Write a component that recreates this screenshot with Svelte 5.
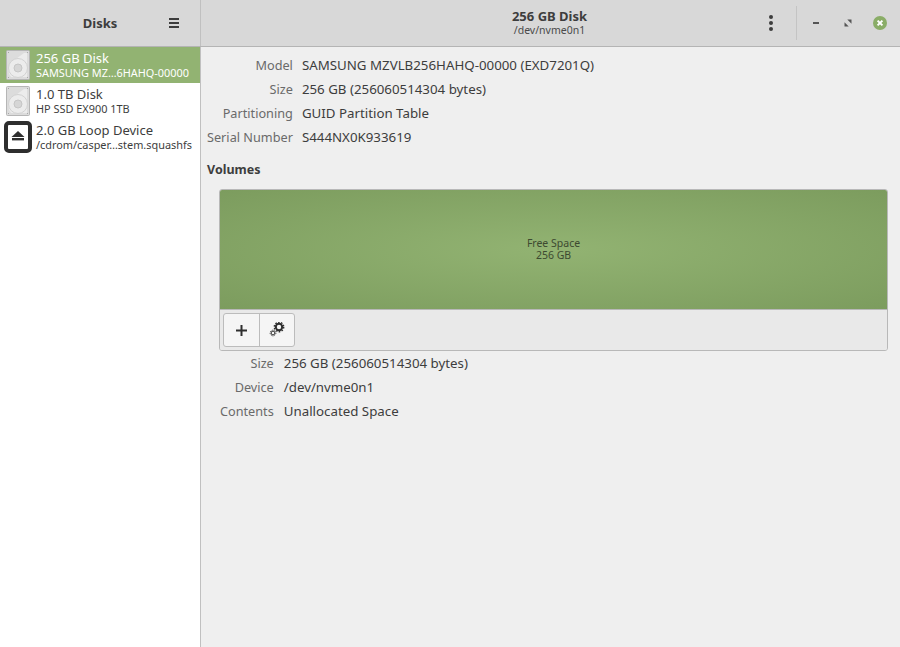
<script>
	const disks = [
		{ name: '256 GB Disk', sub: 'SAMSUNG MZ…6HAHQ-00000', kind: 'disk', selected: true },
		{ name: '1.0 TB Disk', sub: 'HP SSD EX900 1TB', kind: 'disk' },
		{ name: '2.0 GB Loop Device', sub: '/cdrom/casper…stem.squashfs', kind: 'loop' }
	];
	const driveInfo = [
		['Model', 'SAMSUNG MZVLB256HAHQ-00000 (EXD7201Q)'],
		['Size', '256 GB (256060514304 bytes)'],
		['Partitioning', 'GUID Partition Table'],
		['Serial Number', 'S444NX0K933619']
	];
	const volumeInfo = [
		['Size', '256 GB (256060514304 bytes)'],
		['Device', '/dev/nvme0n1'],
		['Contents', 'Unallocated Space']
	];
</script>

<main>
	<header>
		<div class="head-left">
			<span class="head-title">Disks</span>
			<svg class="burger" width="12" height="12" viewBox="0 0 12 12">
				<path d="M1 1h10v2H1zM1 5h10v2H1zM1 9h10v2H1z" fill="#3d3d3d" />
			</svg>
		</div>
		<div class="head-right">
			<div class="head-center">
				<span class="head-title">256 GB Disk</span>
				<span class="head-sub">/dev/nvme0n1</span>
			</div>
			<div class="head-tools">
				<svg width="6" height="18" viewBox="0 0 6 18">
					<circle cx="3" cy="3" r="2" fill="#3d3d3d" />
					<circle cx="3" cy="9" r="2" fill="#3d3d3d" />
					<circle cx="3" cy="15" r="2" fill="#3d3d3d" />
				</svg>
				<div class="sep"></div>
				<div class="win-btns">
					<span class="win-btn">
						<svg width="8" height="8" viewBox="0 0 8 8"><rect x="1" y="3" width="6" height="2" fill="#555" /></svg>
					</span>
					<span class="win-btn">
						<svg width="8" height="8" viewBox="0 0 8 8">
							<path d="M7.5 0.5v4.2L3.3 0.5zM0.5 7.5V3.3L4.7 7.5z" fill="#555" />
						</svg>
					</span>
					<span class="win-btn">
						<svg width="14" height="14" viewBox="0 0 14 14">
							<circle cx="7" cy="7" r="7" fill="#8aad67" />
							<path d="M4.6 4.6l4.8 4.8M9.4 4.6l-4.8 4.8" stroke="#fff" stroke-width="2" />
						</svg>
					</span>
				</div>
			</div>
		</div>
	</header>

	<div class="body">
		<aside>
			{#each disks as disk}
				<div class="row" class:selected={disk.selected}>
					{#if disk.kind === 'disk'}
						<svg class="icon" width="28" height="32" viewBox="0 0 28 32">
							<rect x="1.5" y="1.5" width="23" height="29" rx="1" fill="#dcdcdc" stroke="#b6b6b6" />
							<path d="M19 4 H22 V28 H6 A 10 10 0 0 1 3.5 21 C 3.5 17 5 15 7.5 12.5 Z" fill="#ececec" />
							<circle cx="13" cy="19" r="9.5" fill="#ececec" stroke="#d2d2d2" />
							<circle cx="13" cy="19" r="4" fill="#d6d6d6" stroke="#c6c6c6" />
							<g fill="#a8a8a8">
								<rect x="3" y="3" width="1" height="1" />
								<rect x="22" y="3" width="1" height="1" />
								<rect x="3" y="28" width="1" height="1" />
								<rect x="22" y="28" width="1" height="1" />
							</g>
						</svg>
					{:else}
						<svg class="icon loop" width="28" height="32" viewBox="0 0 28 32">
							<rect x="2" y="2" width="24" height="28" rx="3" fill="#fff" stroke="#2e2e2e" stroke-width="4" />
							<path d="M14 10l6.5 6H7.5z" fill="#2e2e2e" />
							<rect x="8" y="17" width="12" height="2.4" fill="#2e2e2e" />
						</svg>
					{/if}
					<div class="row-text">
						<span class="row-name">{disk.name}</span>
						<span class="row-sub">{disk.sub}</span>
					</div>
				</div>
			{/each}
		</aside>

		<section>
			<dl class="info drive">
				{#each driveInfo as [key, value]}
					<dt>{key}</dt>
					<dd>{value}</dd>
				{/each}
			</dl>

			<h2>Volumes</h2>

			<div class="volumes">
				<div class="free">
					<span>Free Space</span>
					<span>256 GB</span>
				</div>
				<div class="toolbar">
					<div class="btn-group">
						<button aria-label="Add">
							<svg width="11" height="11" viewBox="0 0 11 11">
								<path d="M4.5 0h2v4.5H11v2H6.5V11h-2V6.5H0v-2h4.5z" fill="#2e2e2e" />
							</svg>
						</button>
						<button aria-label="Settings">
							<svg width="16" height="16" viewBox="0 0 16 16">
								<circle cx="10" cy="5" r="3.2" fill="none" stroke="#2e2e2e" stroke-width="2" />
								<circle cx="10" cy="5" r="4.7" fill="none" stroke="#2e2e2e" stroke-width="1.4" stroke-dasharray="1.6 1.35" />
								<circle cx="4" cy="11" r="1.9" fill="none" stroke="#2e2e2e" stroke-width="1" />
								<circle cx="4" cy="11" r="2.9" fill="none" stroke="#2e2e2e" stroke-width="0.9" stroke-dasharray="1 1" />
							</svg>
						</button>
					</div>
				</div>
			</div>

			<dl class="info volume">
				{#each volumeInfo as [key, value]}
					<dt>{key}</dt>
					<dd>{value}</dd>
				{/each}
			</dl>
		</section>
	</div>
</main>

<style>
	:global(body) {
		margin: 0;
	}
	main {
		width: 900px;
		height: 647px;
		display: flex;
		flex-direction: column;
		background: #efefef;
		color: #3d3d3d;
		font-family: "Noto Sans", sans-serif;
		font-size: 13px;
		overflow: hidden;
	}
	header {
		height: 46px;
		flex: none;
		display: flex;
		background: #d8d8d8;
		border-bottom: 1px solid #b4b4b4;
		box-sizing: content-box;
	}
	.head-left {
		width: 200px;
		flex: none;
		border-right: 1px solid #c0c0c0;
		display: flex;
		align-items: center;
		box-sizing: content-box;
		position: relative;
		justify-content: center;
	}
	.head-title {
		font-weight: 700;
		font-size: 13px;
		line-height: 15px;
	}
	.burger {
		position: absolute;
		left: 168px;
		top: 17px;
	}
	.head-right {
		flex: 1;
		position: relative;
		display: flex;
		justify-content: center;
		align-items: center;
	}
	.head-center {
		display: flex;
		flex-direction: column;
		align-items: center;
		margin-left: -2px;
	}
	.head-sub {
		font-size: 10.5px;
		line-height: 13px;
		color: #4a4a4a;
	}
	.head-tools {
		position: absolute;
		right: 0;
		top: 0;
		bottom: 0;
		display: flex;
		align-items: center;
	}
	.sep {
		width: 1px;
		height: 34px;
		background: #c4c4c4;
		margin: 0 3px 0 22px;
	}
	.win-btns {
		display: flex;
		align-items: center;
		padding-right: 4px;
	}
	.win-btn {
		width: 32px;
		display: flex;
		justify-content: center;
	}
	.body {
		flex: 1;
		display: flex;
		min-height: 0;
	}
	aside {
		width: 200px;
		flex: none;
		background: #fff;
		border-right: 1px solid #c0c0c0;
		box-sizing: content-box;
	}
	.row {
		height: 36px;
		display: flex;
		align-items: center;
		padding-left: 5px;
		gap: 3px;
		color: #3d3d3d;
	}
	.row.selected {
		background: #92b372;
		color: #fff;
	}
	.icon {
		flex: none;
	}
	.icon.loop {
		margin-left: -1px;
		margin-right: 1px;
	}
	.row-text {
		display: flex;
		flex-direction: column;
		white-space: nowrap;
	}
	.row-name {
		font-size: 13px;
		line-height: 15px;
	}
	.row-sub {
		font-size: 10.9px;
		line-height: 14px;
	}
	section {
		flex: 1;
		padding: 6px 12px 0 6px;
	}
	.info {
		display: grid;
		grid-template-columns: max-content 1fr;
		column-gap: 9px;
		margin: 0;
		line-height: 24px;
		font-size: 13.3px;
	}
	.info dt {
		color: #6a6a6a;
		text-align: right;
		font-size: 12.7px;
	}
	.info dd {
		margin: 0;
	}
	.drive {
		padding-bottom: 9px;
	}
	h2 {
		margin: 0;
		font-size: 12.5px;
		line-height: 24px;
		font-weight: 700;
	}
	.volumes {
		margin: 7px 0 0 12px;
		height: 162px;
		box-sizing: border-box;
		border: 1px solid #b8b8b8;
		border-radius: 3px;
		display: flex;
		flex-direction: column;
		overflow: hidden;
	}
	.free {
		height: 120px;
		flex: none;
		background: radial-gradient(ellipse at center, #92b372 0%, #7c9c5e 100%);
		display: flex;
		flex-direction: column;
		align-items: center;
		justify-content: center;
		padding-bottom: 2px;
		box-sizing: border-box;
		font-size: 10.5px;
		line-height: 12px;
		color: #3d4a30;
		border-bottom: 1px solid #b8b8b8;
	}
	.toolbar {
		flex: 1;
		background: #e9e9e9;
		padding: 3px 3px;
		display: flex;
	}
	.btn-group {
		display: flex;
		height: 34px;
		border: 1px solid #bcbcbc;
		border-radius: 3px;
		box-sizing: border-box;
		background: #f5f5f5;
	}
	.btn-group button {
		width: 35px;
		padding: 0;
		border: 0;
		background: none;
		display: flex;
		align-items: center;
		justify-content: center;
	}
	.btn-group button + button {
		border-left: 1px solid #bcbcbc;
		width: 35px;
	}
	.volume {
		margin: 0 0 0 13px;
		column-gap: 10px;
	}
</style>
